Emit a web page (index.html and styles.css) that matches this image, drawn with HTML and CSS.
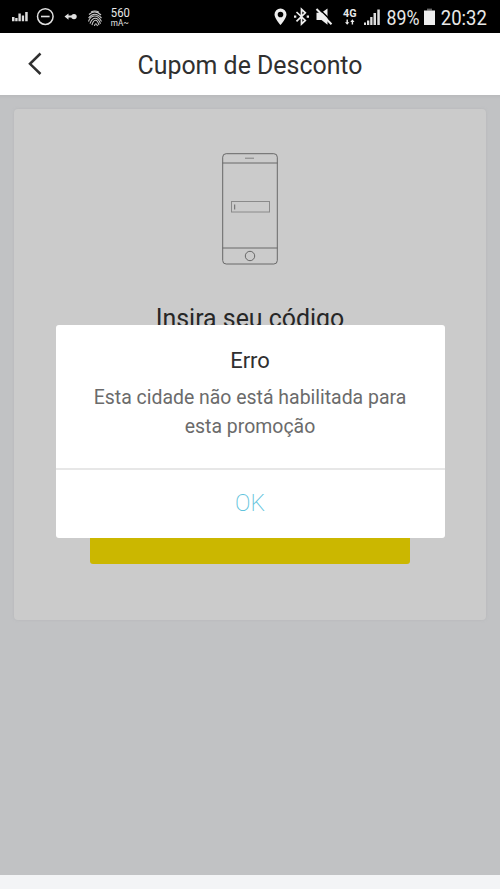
FILE: index.html
```html
<!DOCTYPE html>
<html lang="pt-BR">
<head>
<meta charset="utf-8">
<title>Cupom de Desconto</title>
<link rel="stylesheet" href="styles.css">
</head>
<body>
<div class="screen">
  <div class="status">
    <svg class="status-left" width="140" height="33" viewBox="0 0 140 33">
      <path d="M12 17h2.500v4.200H12zM15.200 18h2.400v3.200h-2.400zM18.400 13.500h2.400v7.700h-2.400zM21.800 15.500h2.300v5.700h-2.300zM25.200 12h2.500v9.200h-2.500z" fill="#ddd"/>
      <circle cx="45.300" cy="16.600" r="7.800" fill="none" stroke="#e0e0e0" stroke-width="1.500"/>
      <path d="M41 16.500h8.600" stroke="#e0e0e0" stroke-width="1.600"/>
      <path d="M64.500 16.600l4-3.200v2.200h4v2h-4v2.200z" fill="#e0e0e0"/>
      <circle cx="74" cy="16.600" r="2.700" fill="#e0e0e0"/>
      <g fill="none" stroke="#c8c8c8" stroke-width="1.100">
        <path d="M89 14.500q6-5.500 12 .5M88.500 18q6-7.500 13 0M88.500 21.500c2-6.500 9-8 13 0M90 23.700c2-6.500 7.500-8 10.500 0M92 25.200c1.500-6 5-7 7 0M94.500 26c.5-3 2-3 3 0"/>
        <path d="M91 12q4-2 8 .3"/>
      </g>
      <text class="meter" x="110.800" y="17" textLength="19" lengthAdjust="spacingAndGlyphs">560</text>
      <text class="meter-unit" x="110.800" y="25.600" textLength="18" lengthAdjust="spacingAndGlyphs">mA~</text>
    </svg>
    <svg class="status-right" width="230" height="33" viewBox="270 0 230 33">
      <path fill="#eee" fill-rule="evenodd" d="M280.500 8.500a6 6 0 0 0-6 6c0 4 6 10.500 6 10.500s6-6.500 6-10.500a6 6 0 0 0-6-6zm0 3.200a2.800 2.800 0 1 1 0 5.600 2.800 2.800 0 0 1 0-5.600z"/>
      <path d="M296.500 12l8.800 8.500-3.800 3.500V9.300l3.800 3.500-8.800 8.500" fill="none" stroke="#eee" stroke-width="1.700"/>
      <path d="M294 15.500h2.300v2.300H294zM306.700 15.500h2.300v2.300h-2.300z" fill="#eee"/>
      <path d="M316.500 12.800h5l6-4.300v16.300l-6-4.800h-5z" fill="#eee"/>
      <path d="M318 7.800L333 22.500" stroke="#000" stroke-width="1.600"/>
      <path d="M316.500 9L331.500 24.300" stroke="#eee" stroke-width="2"/>
      <text class="network" x="343" y="17" textLength="13.500" lengthAdjust="spacingAndGlyphs">4G</text>
      <path d="M345 22.200h1.500V19.500h1.400v2.700h1.400l-2.100 2.600zM350.300 21.900h1.400v2.700h1.400v-2.700h1.400l-2.100-2.600z" fill="#eee"/>
      <path d="M364 22.500h2V25h-2zM367 20.500h2.300V25H367zM370.200 17h2.300v8h-2.300zM373.500 13h2.500v12h-2.500zM377.300 9.500h2.500V25h-2.500z" fill="#ddd"/>
      <text class="reading" x="386.500" y="24.500" textLength="33" lengthAdjust="spacingAndGlyphs">89%</text>
      <path d="M427 8.600h5v2h-5z" fill="#666"/>
      <path d="M424 10.500h11V25h-11z" fill="#eee"/>
      <text class="reading" x="440.800" y="24.500" textLength="46" lengthAdjust="spacingAndGlyphs">20:32</text>
    </svg>
  </div>
  <header class="bar">
    <svg class="back" width="16" height="24" viewBox="0 0 16 24"><path d="M13.500 1.500L3 11.800 13.500 22" fill="none" stroke="#303030" stroke-width="2.500"/></svg>
    <h1 class="title">Cupom de Desconto</h1>
  </header>
  <main class="content">
    <section class="card">
      <svg class="phone" width="56" height="112" viewBox="0 0 56 112" fill="none" stroke="#686868" stroke-width="1">
        <rect x=".7" y=".7" width="54.600" height="110.300" rx="3.500"/>
        <path d="M.5 10h55M.5 95h55"/>
        <path d="M23 5.200h9" stroke="#808080"/>
        <rect x="9.500" y="48.500" width="38" height="10.500" stroke="#8a8a8a"/>
        <path d="M12.700 51.500v5"/>
        <circle cx="28" cy="103" r="4.700"/>
      </svg>
      <h2 class="prompt">Insira seu código</h2>
      <div class="submit"></div>
    </section>
  </main>
  <div class="foot"></div>
  <div class="dialog" role="alertdialog">
    <div class="message">
      <h3 class="heading">Erro</h3>
      <p class="text">Esta cidade não está habilitada para esta promoção</p>
    </div>
    <div class="ok">OK</div>
  </div>
</div>
</body>
</html>
```

FILE: styles.css
```css
* { box-sizing: border-box; margin: 0; }
body { font-family: Roboto, sans-serif; color: #303030; }
.screen { position: relative; width: 500px; height: 889px; display: flex; flex-direction: column; overflow: hidden; }
.status { height: 33px; background: #000; display: flex; justify-content: space-between; }
.status text { fill: #e8e8e8; font-family: Roboto, sans-serif; }
.meter { font-size: 12px; }
.meter-unit { font-size: 9.500px; }
.network { font-size: 10px; font-weight: 700; }
.reading { font-size: 21px; }
.bar { height: 62px; background: #fff; display: grid; grid-template-columns: 62px 1fr 62px; align-items: center; }
.back { margin-left: 27px; }
.title { font-size: 24.900px; line-height: 32px; font-weight: 400; text-align: center; padding-top: 4px; white-space: nowrap; }
.content { flex: 1; background: linear-gradient(#b9babc, #c1c2c4 4px); padding: 13.500px 14px; }
.card { height: 511px; background: #cbcbcb; border-radius: 4px; box-shadow: 0 0 3px #b5b6b8; display: flex; flex-direction: column; align-items: center; }
.phone { margin-top: 44px; }
.prompt { margin-top: 38px; font-size: 24.900px; line-height: 32px; font-weight: 400; color: #272727; }
.submit { width: 320px; height: 60px; margin-top: auto; margin-bottom: 55.500px; background: #cbb700; border-radius: 3px; }
.foot { height: 14px; background: #f3f4f6; }
.dialog { position: absolute; left: 55.500px; top: 325px; width: 389px; height: 212.500px; background: #fff; border-radius: 3px; display: flex; flex-direction: column; text-align: center; }
.message { height: 145px; border-bottom: 2px solid #e7e7e7; padding: 21px 30px 0; }
.heading { font-size: 22px; line-height: 30px; font-weight: 400; }
.text { margin-top: 7px; font-size: 19.450px; line-height: 29px; color: #6b6b6b; }
.ok { flex: 1; display: flex; align-items: center; justify-content: center; font-size: 23px; font-weight: 200; color: #62c3dc; }
```
